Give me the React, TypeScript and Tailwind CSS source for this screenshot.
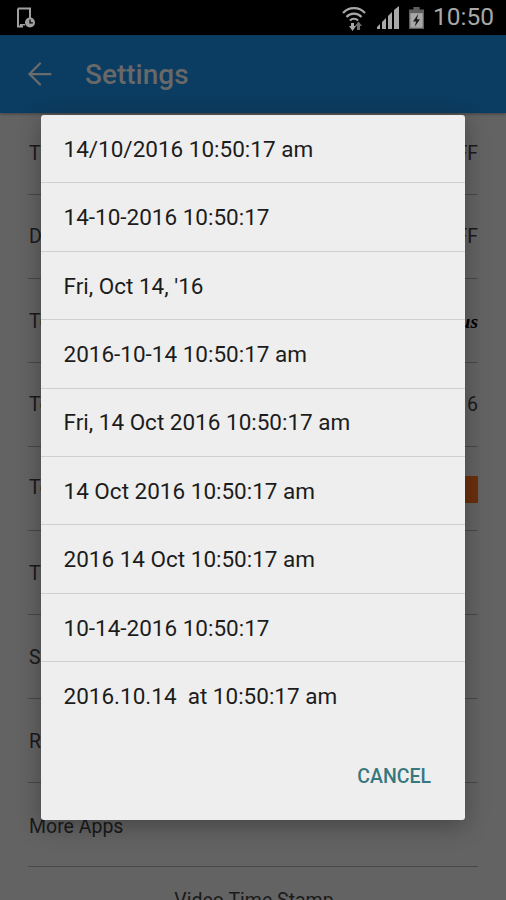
import { ArrowLeft } from 'lucide-react'

const FORMATS = [
  '14/10/2016 10:50:17 am',
  '14-10-2016 10:50:17',
  "Fri, Oct 14, '16",
  '2016-10-14 10:50:17 am',
  'Fri, 14 Oct 2016 10:50:17 am',
  '14 Oct 2016 10:50:17 am',
  '2016 14 Oct 10:50:17 am',
  '10-14-2016 10:50:17',
  '2016.10.14  at 10:50:17 am',
]

const ROWS = [
  { label: 'Time Stamp', value: 'OFF', top: 'pt-[29px]' },
  { label: 'Date Stamp', value: 'OFF', top: 'pt-[30px]' },
  { label: 'Text Font', value: 'font', top: 'pt-[31px]' },
  { label: 'Text Size', value: '16', top: 'pt-[30px]' },
  { label: 'Text Color', value: 'swatch', top: 'pt-[29px]' },
  { label: 'Time Format', value: '', top: 'pt-[31px]' },
  { label: 'Share App', value: '', top: 'pt-[31px]' },
  { label: 'Rate App', value: '', top: 'pt-[31px]' },
  { label: 'More Apps', value: '', top: 'pt-[32px]' },
]

function StatusIcons() {
  return (
    <div className="flex items-center">
      <svg width="24" height="26" viewBox="0 0 24 26" fill="none" stroke="#a8a8a8">
        <path d="M1 8 A15 15 0 0 1 23 8" strokeWidth="2.2" />
        <path d="M4.500 12 A10 10 0 0 1 19.500 12" strokeWidth="2.2" />
        <path d="M8 15.500 A5.500 5.500 0 0 1 16 15.500" strokeWidth="2.2" />
        <path d="M9 18h3v3h2l-3.500 5l-3.500-5h2z" fill="#a8a8a8" stroke="none" />
        <path d="M15 25v-4h-2l3.500-4.500l3.500 4.500h-2v4z" fill="#6f6f6f" stroke="none" />
      </svg>
      <svg width="23" height="23" viewBox="0 0 23 23" className="ml-[11px]">
        <path d="M0 23v-2l3-3v5z" fill="#a8a8a8" />
        <path d="M5 23v-7l4-4v11z" fill="#a8a8a8" />
        <path d="M11 23v-13l4-4v17z" fill="#a8a8a8" />
        <path d="M17 23v-19l5-4v23z" fill="#a8a8a8" />
      </svg>
      <svg width="15" height="24" viewBox="0 0 17 25" className="ml-[9px]">
        <path d="M5 0h7v3h5v22h-17v-22h5z" fill="#5f5f5f" />
        <path d="M1.500 7h14v16.500h-14z" fill="#a8a8a8" />
        <path d="M10.500 8l-6 8.500h3.500l-1.500 6l6-8.500h-3.500z" fill="#1c1c1c" />
      </svg>
    </div>
  )
}

export default function App() {
  return (
    <div className="relative w-[506px] h-[900px] overflow-hidden bg-[#636363] font-['Roboto',sans-serif]">
      <div className="h-[35px] bg-black flex items-center justify-between pr-[12px]">
        <svg width="20" height="22" viewBox="0 0 20 22" className="ml-[16px]" fill="none">
          <path d="M2 1.500h12v12M2 1.500v18h5" stroke="#a0a0a0" strokeWidth="2" />
          <path d="M4 17h5v1.500h-3v1h-2z" fill="#a0a0a0" />
          <circle cx="14" cy="15.500" r="5" fill="#a0a0a0" />
          <path d="M14 12.500v3.300h2.800" stroke="#000" strokeWidth="1.300" />
        </svg>
        <div className="flex items-center">
          <StatusIcons />
          <span className="ml-[9px] text-[24.500px] leading-none text-[#a8a8a8]">10:50</span>
        </div>
      </div>

      <div className="h-[78px] bg-[#0b3c61] flex items-center pl-[22px] shadow-[0_1px_3px_rgba(0,0,0,0.35)]">
        <ArrowLeft size={36} strokeWidth={1.5} className="text-[#6b6b6b]" />
        <span className="ml-[27px] pt-[2px] text-[28px] font-medium leading-none text-[#686868]">Settings</span>
      </div>

      <div className="pl-[28px] pr-[28px]">
        {ROWS.map(r => (
          <div key={r.label} className={`h-[84px] flex items-start justify-between border-b border-[#484848] text-[19.500px] leading-[24px] text-[#1a1a1a] ${r.top} first:h-[82px]`}>
            <span className="pl-[1px]">{r.label}</span>
            {r.value === 'swatch' ? (
              <div className="w-[30px] h-[27px] bg-[#6b2f0c]" />
            ) : r.value === 'font' ? (
              <span className="font-['Liberation_Serif',serif] font-bold italic text-black">Nautilus</span>
            ) : (
              <span>{r.value}</span>
            )}
          </div>
        ))}
        <div className="pt-[22px] pl-[2px] text-center text-[19.500px] leading-[24px] text-[#1a1a1a]">Video Time Stamp</div>
      </div>

      <div className="absolute left-[41px] top-[115px] w-[424px] h-[705px] rounded-[3px] bg-[#eeeeee] flex flex-col shadow-[0_6px_24px_rgba(0,0,0,0.3)]">
        {FORMATS.map((f, i) => (
          <div key={f} className={`h-[68.400px] shrink-0 flex items-center pl-[22.500px] pt-[2px] text-[22.500px] text-[#1c1c1c] whitespace-pre ${i < FORMATS.length - 1 ? 'border-b border-[#d0d0d0]' : ''}`}>
            {f}
          </div>
        ))}
        <div className="flex-1 flex items-center justify-end pr-[34px] pt-[2px]">
          <span className="text-[19.500px] font-medium text-[#37787f]">CANCEL</span>
        </div>
      </div>
    </div>
  )
}
